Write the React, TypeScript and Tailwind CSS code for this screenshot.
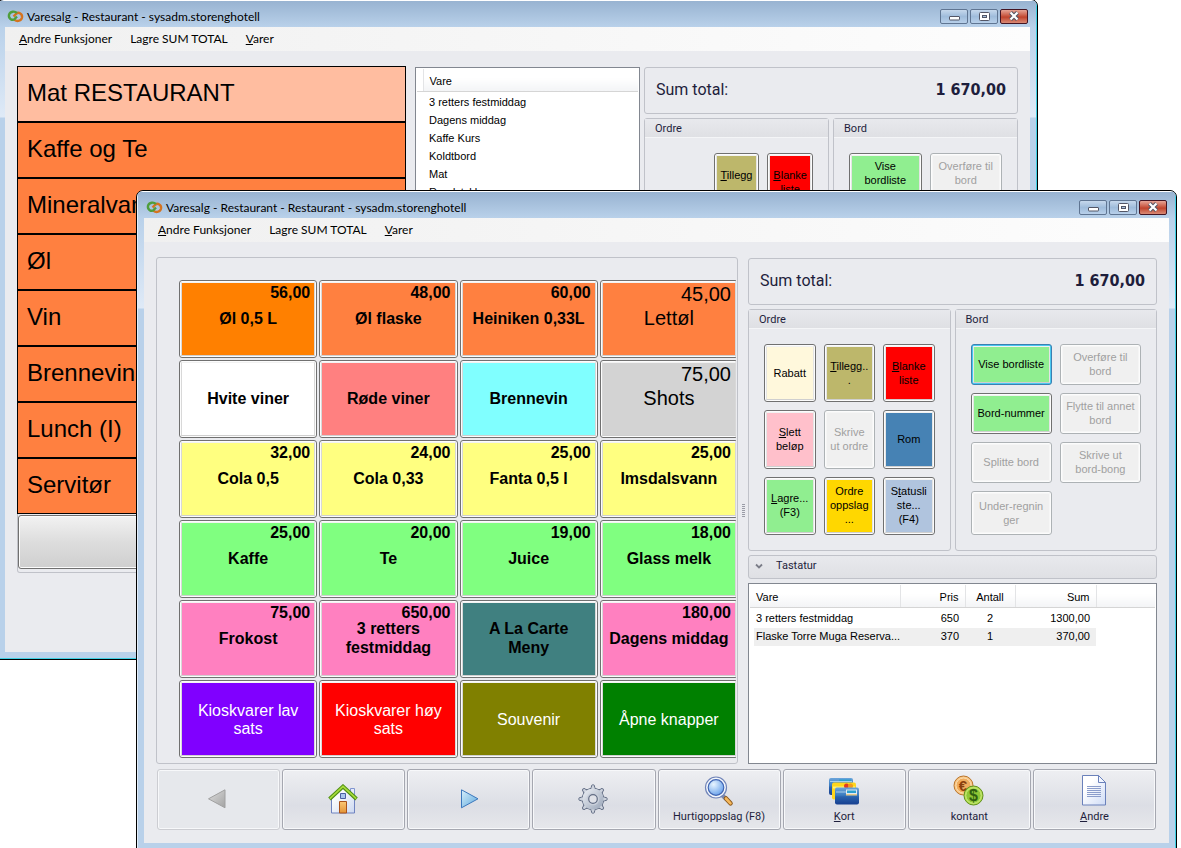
import { ReactNode } from "react";
import clsx from "clsx";

type Product = {
  name: string[];
  price?: string;
  color: string;
  style?: "bold" | "large" | "light";
};

const products: Product[] = [
  { name: ["Øl 0,5 L"], price: "56,00", color: "bg-[#ff8000]" },
  { name: ["Øl flaske"], price: "48,00", color: "bg-[#ff8040]" },
  { name: ["Heiniken 0,33L"], price: "60,00", color: "bg-[#ff8040]" },
  { name: ["Lettøl"], price: "45,00", color: "bg-[#ff8040]", style: "large" },
  { name: ["Hvite viner"], color: "bg-white" },
  { name: ["Røde viner"], color: "bg-[#ff8080]" },
  { name: ["Brennevin"], color: "bg-[#80ffff]" },
  { name: ["Shots"], price: "75,00", color: "bg-[#d3d3d3]", style: "large" },
  { name: ["Cola 0,5"], price: "32,00", color: "bg-[#ffff80]" },
  { name: ["Cola 0,33"], price: "24,00", color: "bg-[#ffff80]" },
  { name: ["Fanta 0,5 l"], price: "25,00", color: "bg-[#ffff80]" },
  { name: ["Imsdalsvann"], price: "25,00", color: "bg-[#ffff80]" },
  { name: ["Kaffe"], price: "25,00", color: "bg-[#80ff80]" },
  { name: ["Te"], price: "20,00", color: "bg-[#80ff80]" },
  { name: ["Juice"], price: "19,00", color: "bg-[#80ff80]" },
  { name: ["Glass melk"], price: "18,00", color: "bg-[#80ff80]" },
  { name: ["Frokost"], price: "75,00", color: "bg-[#ff80c0]" },
  { name: ["3 retters", "festmiddag"], price: "650,00", color: "bg-[#ff80c0]" },
  { name: ["A La Carte", "Meny"], color: "bg-[#408080]" },
  { name: ["Dagens middag"], price: "180,00", color: "bg-[#ff80c0]" },
  { name: ["Kioskvarer lav", "sats"], color: "bg-[#8000ff]", style: "light" },
  { name: ["Kioskvarer høy", "sats"], color: "bg-[#ff0000]", style: "light" },
  { name: ["Souvenir"], color: "bg-[#808000]", style: "light" },
  { name: ["Åpne knapper"], color: "bg-[#008000]", style: "light" },
];

const categories = [
  "Mat RESTAURANT",
  "Kaffe og Te",
  "Mineralvann",
  "Øl",
  "Vin",
  "Brennevin",
  "Lunch (I)",
  "Servitør",
];

const items = [
  "3 retters festmiddag",
  "Dagens middag",
  "Kaffe Kurs",
  "Koldtbord",
  "Mat",
  "Rundstykker",
];

const orderLines = [
  { name: "3 retters festmiddag", price: "650", count: "2", sum: "1300,00" },
  { name: "Flaske Torre Muga Reserva...", price: "370", count: "1", sum: "370,00" },
];

/* ---------- Window chrome ---------- */

function Logo() {
  return (
    <svg width="17" height="13" viewBox="0 0 17 13" fill="none" strokeWidth="2.4">
      <path d="M7 9.500C9 11.600 14 11.600 15 7.800 15.800 3.600 11.500 1.800 9.500 3.500L6.500 6.500" stroke="#d5731f" />
      <path d="M10 3C8 1 3 1 2 4.800 1.200 9 5.500 10.800 7.500 9.100L10 6.500" stroke="#4f9e3c" />
    </svg>
  );
}

function CaptionButton({ kind }: { kind: "Minimer" | "Maksimer" | "Lukk" }) {
  return (
    <button
      aria-label={kind}
      className={clsx(
        "flex h-[15px] w-7 items-center justify-center rounded-[2px] border",
        kind === "Lukk"
          ? "border-[#431422] bg-linear-to-b from-[#e6a496] via-[#c0432c] via-55% to-[#d98a76]"
          : "border-[#5f7592] bg-linear-to-b from-[#c6d8ec] via-[#9fbcdb] via-50% to-[#b8d0ea]",
      )}
    >
      {kind === "Minimer" && (
        <svg width="13" height="11" viewBox="0 0 13 11">
          <rect x="1.500" y="5.500" width="10" height="3.500" rx="0.500" fill="#fff" stroke="#535666" />
        </svg>
      )}
      {kind === "Maksimer" && (
        <svg width="11" height="9" viewBox="0 0 11 9">
          <rect x="0.500" y="0.500" width="10" height="8" rx="1" fill="#fff" stroke="#535666" />
          <rect x="3.500" y="3.500" width="4" height="2" fill="#a9c3df" stroke="#535666" />
        </svg>
      )}
      {kind === "Lukk" && (
        <svg width="12" height="10" viewBox="0 0 12 10">
          <path d="m2.500 1.500 7 7m0-7-7 7" stroke="#535666" strokeWidth="4.200" />
          <path d="m2.500 1.500 7 7m0-7-7 7" stroke="#fff" strokeWidth="2.200" />
        </svg>
      )}
    </button>
  );
}

function AppWindow({
  title,
  className,
  children,
}: {
  title: string;
  className: string;
  children: ReactNode;
}) {
  return (
    <section
      className={clsx(
        "absolute flex flex-col overflow-hidden rounded-t-[7px] border border-black bg-[#b9d1ea] font-['Lato','Noto_Sans',sans-serif] text-[12px] text-black",
        className,
      )}
    >
      <div className="flex min-h-0 flex-1 flex-col rounded-t-[6px] border border-t-white border-r-[#3fd0e4] border-b-[#3fd0e4] border-l-[#e4eef9]">
        <header className="flex h-[26px] shrink-0 items-center bg-linear-to-b from-[#98b3d1] to-[#b9d1ea] pt-1 pr-2 pl-2">
          <Logo />
          <h1 className="flex-1 pt-px pl-[3px] leading-4">{title}</h1>
          <div className="flex gap-0.5">
            <CaptionButton kind="Minimer" />
            <CaptionButton kind="Maksimer" />
            <CaptionButton kind="Lukk" />
          </div>
        </header>
        {/* side borders carry a light streak that stops below the menu */}
        <div className="flex min-h-0 flex-1 bg-linear-to-b from-[#b9d1ea] from-0% via-[#dfeaf7] via-[90px] to-[#b9d1ea] to-[91px] px-1.5 pb-1.5">
          <div className="flex min-h-0 flex-1 flex-col bg-[#eaebef]">
            <nav className="flex h-6 shrink-0 items-center gap-[18px] bg-linear-to-r from-[#f0f0f0] to-[#fdfdfd] pl-3.5">
              <button className="leading-4">
                <u>A</u>ndre Funksjoner
              </button>
              <button className="leading-4">
                La<u>g</u>re SUM TOTAL
              </button>
              <button className="leading-4">
                <u>V</u>arer
              </button>
            </nav>
            {children}
          </div>
        </div>
      </div>
    </section>
  );
}

/* ---------- Shared controls ---------- */

function SumTotal() {
  return (
    <div className="flex h-[47px] shrink-0 items-center justify-between rounded-[3px] border border-[#c0c2c9] px-[11px] pb-0.5 font-['DejaVu_Sans_Condensed','DejaVu_Sans',sans-serif] text-[16px] text-[#1e1e3c]">
      <span className="font-['Roboto',sans-serif]">Sum total:</span>
      <strong>1 670,00</strong>
    </div>
  );
}

function Group({ title, children }: { title: string; children: ReactNode }) {
  return (
    <fieldset className="flex min-w-0 flex-1 flex-col rounded-[3px] border border-[#c0c2c9]">
      <div className="flex h-[19px] shrink-0 items-center border-b border-[#f4f5f7] bg-linear-to-b from-[#e8e9ed] to-[#dfe0e4] pt-0.5 pl-2.5 font-['Roboto',sans-serif] text-[11px] text-[#1e1e3c]">
        {title}
      </div>
      <div className="flex min-h-0 flex-1 flex-col p-[15px]">{children}</div>
    </fieldset>
  );
}

function ColorButton({
  color,
  disabled,
  focused,
  children,
}: {
  color?: string;
  disabled?: boolean;
  focused?: boolean;
  children: ReactNode;
}) {
  return (
    <button
      disabled={disabled}
      className={clsx(
        "flex min-w-0 overflow-hidden rounded-[3px] border p-px font-['Liberation_Sans',Arial,sans-serif] text-[11px] leading-[14px]",
        focused && "border-[#3c7fb1] bg-[#48c8f0]",
        disabled && "border-[#adb2b5] bg-[#fcfcfc] text-[#a0a0a0]",
        !focused && !disabled && "border-[#707070] bg-[#fcfcfc]",
      )}
    >
      <span
        className={clsx(
          "flex h-full w-full items-center justify-center border border-x-[#e4e4e4] border-t-[#f2f2f2] border-b-[#cfcfcf] pb-px text-center",
          color ?? "bg-[#f0f0f0]",
          disabled && "border-[#f6f6f6]!",
        )}
      >
        <span className="block">{children}</span>
      </span>
    </button>
  );
}

function ProductButton({ name, price, color, style = "bold" }: Product) {
  return (
    <button className="flex rounded-[3px] border border-[#707070] bg-[#fcfcfc] p-px font-['Liberation_Sans',Arial,sans-serif]">
      <span
        className={clsx(
          "grid h-full w-full border border-x-[#d8d8d8] border-t-[#f2f2f2] border-b-[#cfcfcf]",
          color,
          style === "bold" && "pb-0.5 text-[16px] leading-[19px] font-bold",
          style === "large" && "pb-0.5 text-[20px] leading-[22px]",
          style === "light" && "pt-0.5 text-[16px] leading-[18px] text-white",
        )}
      >
        {price && <span className="pr-1 text-right [grid-area:1/1]">{price}</span>}
        <span className="self-center text-center [grid-area:1/1]">
          {name.map((line) => (
            <span key={line} className="block whitespace-nowrap">
              {line}
            </span>
          ))}
        </span>
      </span>
    </button>
  );
}

function ToolButton({
  icon,
  label,
  children,
  disabled,
}: {
  icon: ReactNode;
  label: string;
  children?: ReactNode;
  disabled?: boolean;
}) {
  return (
    <button
      aria-label={label}
      disabled={disabled}
      className={clsx(
        "flex h-[61px] min-w-0 flex-1 flex-col items-center justify-center gap-0.5 rounded-[3px] border font-['Roboto',sans-serif] text-[11px] leading-4 text-[#1e1e3c]",
        "shadow-[inset_0_0_0_1px_#f7f8fa]",
        disabled
          ? "border-[#cccdd2] bg-[#e6e8ec]"
          : "border-[#a5a7b0] bg-linear-to-b from-[#eeeff2] via-[#dcdee5] via-60% to-[#e6e7eb]",
      )}
    >
      {icon}
      {children && <span>{children}</span>}
    </button>
  );
}

/* ---------- Toolbar icons ---------- */

function ArrowIcon({ back }: { back?: boolean }) {
  return (
    <svg width="32" height="32" viewBox="0 0 32 32">
      <defs>
        <linearGradient id="arrowGray" x1="0" x2="1" y1="0" y2="1">
          <stop offset="0" stopColor="#dedede" />
          <stop offset="1" stopColor="#a2a2a2" />
        </linearGradient>
        <linearGradient id="arrowBlue" x1="0" x2="1" y1="0" y2="1">
          <stop offset="0" stopColor="#d6effb" />
          <stop offset="1" stopColor="#5fa9dd" />
        </linearGradient>
      </defs>
      {back ? (
        <path d="M22 5.800v18L5.500 14.800z" fill="url(#arrowGray)" stroke="#a0a0a0" />
      ) : (
        <path d="M8.500 5.800v18l16.500-9z" fill="url(#arrowBlue)" stroke="#3b77bd" />
      )}
    </svg>
  );
}

function HomeIcon() {
  return (
    <svg width="32" height="32" viewBox="0 0 32 32">
      <defs>
        <linearGradient id="wall" x1="0" x2="1" y1="0" y2="1">
          <stop offset="0.200" stopColor="#fff" />
          <stop offset="1" stopColor="#ccd8f0" />
        </linearGradient>
        <linearGradient id="door" x1="0" x2="0" y1="0" y2="1">
          <stop offset="0" stopColor="#fbc775" />
          <stop offset="1" stopColor="#e39336" />
        </linearGradient>
      </defs>
      <path d="M22.500 4.500h4v10h-4z" fill="#e4eafa" stroke="#8095cf" />
      <path d="M3.500 14.500 15 4l11.500 10.500v14.500h-23z" fill="url(#wall)" stroke="#6f83c0" />
      <path d="M11.500 17.500h7v11.500h-7z" fill="url(#door)" stroke="#a9521b" />
      <path d="M12.500 9.500h5v5h-5z" fill="#a9c5ee" stroke="#4a5fa3" />
      <path d="M1.500 15 15 2.500 28.500 15" fill="none" stroke="#4f8f12" strokeWidth="3.800" />
      <path d="M1.800 14.600 15 2.400 28.200 14.600" fill="none" stroke="#a8dc3c" strokeWidth="1.700" />
    </svg>
  );
}

function GearIcon() {
  const teeth = [0, 45, 90, 135, 180, 225, 270, 315];
  return (
    <svg width="32" height="32" viewBox="0 0 32 32">
      <defs>
        <linearGradient id="gear" x1="0" x2="1" y1="0" y2="1">
          <stop offset="0" stopColor="#eef1f6" />
          <stop offset="1" stopColor="#98a4b7" />
        </linearGradient>
      </defs>
      {/* outline first, then the fill on top so that only the rim keeps the stroke */}
      <g fill="#b9c1ce" stroke="#626d84" strokeLinejoin="round">
        {teeth.map((angle) => (
          <path
            key={angle}
            d="M10.800 6.500 13.200 3.500 13.800 1.200Q15 .4 16.200 1.200L16.800 3.500 19.200 6.500"
            transform={`rotate(${angle} 15 15)`}
          />
        ))}
        <circle cx="15" cy="15" r="10.800" />
      </g>
      {teeth.map((angle) => (
        <path
          key={angle}
          d="M11.500 7 13.700 4 14.200 1.600h1.600L16.300 4 18.500 7z"
          fill="#ccd2dc"
          transform={`rotate(${angle} 15 15)`}
        />
      ))}
      <circle cx="15" cy="15" r="10.500" fill="url(#gear)" />
      <circle cx="15" cy="15" r="6.300" fill="#c9cfda" />
      <circle cx="15" cy="15" r="4.300" fill="#e0e2e8" stroke="#626d84" strokeWidth="1.200" />
    </svg>
  );
}

function SearchIcon() {
  return (
    <svg width="32" height="32" viewBox="0 0 32 32">
      <defs>
        <radialGradient id="lens" cx="0.350" cy="0.300" r="0.800">
          <stop offset="0" stopColor="#e8f5ff" />
          <stop offset="1" stopColor="#5f9bea" />
        </radialGradient>
      </defs>
      <path d="m19 20 4 4" stroke="#7b87a8" strokeWidth="4" />
      <path d="m23 23.500 4.500 4.800" stroke="#8d5a1e" strokeWidth="4.600" strokeLinecap="round" />
      <path d="m23 23.500 4.500 4.800" stroke="#f6b95d" strokeWidth="2.600" strokeLinecap="round" />
      <circle cx="13" cy="12.500" r="10.500" fill="#f4f7fc" stroke="#7084b8" strokeWidth="1.200" />
      <circle cx="13" cy="12.500" r="7.800" fill="url(#lens)" stroke="#4166b4" strokeWidth="1.200" />
    </svg>
  );
}

function CardsIcon() {
  return (
    <svg width="32" height="32" viewBox="0 0 32 32">
      <defs>
        <linearGradient id="card" x1="0" x2="0" y1="0" y2="1">
          <stop offset="0" stopColor="#6ba4da" />
          <stop offset="0.450" stopColor="#3b7cc0" />
          <stop offset="0.550" stopColor="#2a62ad" />
          <stop offset="1" stopColor="#173f90" />
        </linearGradient>
      </defs>
      <rect x="1" y="3" width="24" height="17" rx="2" fill="url(#card)" />
      <path d="M11 4.500h12V7H11z" fill="#2ba0cf" />
      <path d="M2 6.500h22" stroke="#a8cdea" />
      <rect x="4" y="7.500" width="24" height="17" rx="2" fill="#ffd61c" />
      <path d="M5 11.500h22v2H5z" fill="#fff27a" />
      <circle cx="18.500" cy="11" r="2.500" fill="#e23b22" />
      <circle cx="22.500" cy="11" r="2.500" fill="#f29a1c" />
      <rect x="7" y="12.500" width="24" height="17" rx="2" fill="url(#card)" />
      <path d="M8 17h10" stroke="#a8cdea" />
      <path d="M18 14.500h11v4.500H18z" fill="#dfe9f4" />
      <path d="M19 15.500h9V18h-9z" fill="#2ba0cf" />
      <path d="M18 19h11v1.500H18z" fill="#e6c98a" />
    </svg>
  );
}

function CoinsIcon() {
  return (
    <svg width="32" height="32" viewBox="0 0 32 32" className="font-['Liberation_Sans',sans-serif] font-bold">
      <circle cx="10.500" cy="10.500" r="9.500" fill="#f9c784" stroke="#b8732b" />
      <circle cx="10.500" cy="10.500" r="7.500" fill="#f0ac5e" stroke="#fbdcae" />
      <text x="10" y="16" fontSize="15" textAnchor="middle" fill="#8a3f0d">
        €
      </text>
      <circle cx="20.500" cy="20.500" r="9.500" fill="#b4de4e" stroke="#5f8f1d" />
      <circle cx="20.500" cy="20.500" r="7.700" fill="#8fc736" stroke="#c9e97c" />
      <text x="20.500" y="26" fontSize="16" textAnchor="middle" fill="#305f10">
        $
      </text>
    </svg>
  );
}

function DocumentIcon() {
  return (
    <svg width="32" height="32" viewBox="0 0 32 32">
      <defs>
        <linearGradient id="sheet" x1="0" x2="1" y1="0" y2="1">
          <stop offset="0.300" stopColor="#fff" />
          <stop offset="1" stopColor="#cfdcf6" />
        </linearGradient>
      </defs>
      <path d="M4.500.500h16l7 7v22.500h-23z" fill="url(#sheet)" stroke="#6a81bb" />
      <path d="M20.500.500v7h7z" fill="#f2f6ff" stroke="#6a81bb" />
      <path d="M9 11.500h14M9 13.500h14M9 15.500h14M9 17.500h14M9 19.500h14M9 21.500h14" stroke="#8b9dcb" />
    </svg>
  );
}

/* ---------- The two windows ---------- */

const headFill = "border-b border-[#d5d5d5] bg-linear-to-b from-white from-40% to-[#f3f4f6]";
const headCell = clsx(headFill, "h-[22px] px-1.5 pt-0.5 font-normal");

function CategoryWindow() {
  return (
    <AppWindow
      title="Varesalg - Restaurant - sysadm.storenghotell"
      className="-top-px right-[143px] bottom-[188px] -left-[3px]"
    >
      <main className="flex min-h-0 flex-1 px-3 pt-[15px]">
        <div className="w-[389px] shrink-0">
          <ul className="font-['Liberation_Sans',Arial,sans-serif] text-[24px]">
            {categories.map((category, i) => (
              <li key={category}>
                <button
                  className={clsx(
                    "h-14 w-full border border-black pb-0.5 pl-[9px] text-left",
                    i === 0 ? "bg-[#ffbda0]" : "bg-[#ff8040]",
                  )}
                >
                  {category}
                </button>
              </li>
            ))}
          </ul>
          <div className="rounded-b-[3px] border border-t-0 border-[#c0c2c9] pt-px pb-[3px]">
            <button
              aria-label="Neste side"
              className="block h-[54px] w-full rounded-[3px] border border-[#707070] bg-linear-to-b from-[#f2f2f2] from-0% via-[#dddddd] via-50% to-[#cfcfcf] shadow-[inset_0_0_0_1px_#fcfcfc]"
            />
          </div>
        </div>

        <div className="mt-px ml-[9px] w-[225px] shrink-0 border border-[#828790] bg-white p-px font-['Liberation_Sans',Arial,sans-serif] text-[11px]">
          <table className="w-full border-collapse text-left">
            <thead>
              <tr>
                <td className="w-1.5 border-r border-b border-r-[#e3e4e6] border-b-[#d5d5d5]" />
                <th className={headCell}>Vare</th>
              </tr>
            </thead>
            <tbody className="before:block before:h-0.5">
              {items.map((item) => (
                <tr key={item} className="h-[18px]">
                  <td />
                  <td className="px-1.5">{item}</td>
                </tr>
              ))}
            </tbody>
          </table>
        </div>

        <div className="mt-px ml-1 flex min-w-0 flex-1 flex-col gap-1">
          <SumTotal />
          <div className="flex h-[242px] gap-1">
            <Group title="Ordre">
              <div className="grid flex-1 grid-cols-3 grid-rows-3 gap-2">
                <span />
                <ColorButton color="bg-[#bdb76b]">
                  <u>T</u>illegg
                  <br />
                  ...
                </ColorButton>
                <ColorButton color="bg-[#ff0000]">
                  <u>B</u>lanke
                  <br />
                  liste
                </ColorButton>
              </div>
            </Group>
            <Group title="Bord">
              <div className="grid flex-1 grid-cols-2 grid-rows-[41px_41px_41px_1fr] gap-2">
                <ColorButton color="bg-[#90ee90]">
                  Vise
                  <br />
                  bordliste
                </ColorButton>
                <ColorButton disabled>
                  Overføre til
                  <br />
                  bord
                </ColorButton>
              </div>
            </Group>
          </div>
        </div>
      </main>
    </AppWindow>
  );
}

function SalesWindow() {
  return (
    <AppWindow
      title="Varesalg - Restaurant - Restaurant - sysadm.storenghotell"
      className="top-[190px] right-1 -bottom-[3px] left-[136px]"
    >
      <main className="flex min-h-0 flex-1 flex-col gap-[5px] px-3 pt-[15px] pb-[13px]">
        <div className="flex min-h-0 flex-1">
          <div className="flex min-w-0 flex-1 rounded-[3px] border border-[#c0c2c9] pt-[22px] pr-px pb-[5px] pl-[22px]">
            <div className="min-w-0 flex-1 overflow-hidden">
              <div className="-mr-0.5 grid h-full grid-cols-4 grid-rows-6 gap-0.5">
                {products.map((product, i) => (
                  <ProductButton key={i} {...product} />
                ))}
              </div>
            </div>
          </div>

          {/* splitter */}
          <div className="flex w-2.5 flex-col items-center justify-center gap-px">
            {[0, 1, 2, 3, 4, 5, 6].map((i) => (
              <span key={i} className="h-px w-[3px] bg-[#9a9ca6]" />
            ))}
          </div>

          <div className="flex w-[409px] shrink-0 flex-col gap-1 pt-px">
            <SumTotal />
            <div className="flex h-[242px] shrink-0 gap-1">
              <Group title="Ordre">
                <div className="grid flex-1 grid-cols-3 grid-rows-3 gap-2">
                  <ColorButton color="bg-[#fff8dc]">Rabatt</ColorButton>
                  <ColorButton color="bg-[#bdb76b]">
                    <u>T</u>illegg..
                    <br />.
                  </ColorButton>
                  <ColorButton color="bg-[#ff0000]">
                    <u>B</u>lanke
                    <br />
                    liste
                  </ColorButton>
                  <ColorButton color="bg-[#ffc0cb]">
                    <u>S</u>lett
                    <br />
                    beløp
                  </ColorButton>
                  <ColorButton disabled>
                    Skrive
                    <br />
                    ut ordre
                  </ColorButton>
                  <ColorButton color="bg-[#4682b4]">Rom</ColorButton>
                  <ColorButton color="bg-[#90ee90]">
                    <u>L</u>agre...
                    <br />
                    (F3)
                  </ColorButton>
                  <ColorButton color="bg-[#ffd700]">
                    Ordre
                    <br />
                    oppslag
                    <br />
                    ...
                  </ColorButton>
                  <ColorButton color="bg-[#b0c4de]">
                    S<u>t</u>atusli
                    <br />
                    ste...
                    <br />
                    (F4)
                  </ColorButton>
                </div>
              </Group>
              <Group title="Bord">
                <div className="grid flex-1 grid-cols-2 grid-rows-[41px_41px_41px_1fr] gap-2">
                  <ColorButton color="bg-[#90ee90]" focused>
                    Vise bordliste
                  </ColorButton>
                  <ColorButton disabled>
                    Overføre til
                    <br />
                    bord
                  </ColorButton>
                  <ColorButton color="bg-[#90ee90]">Bord-nummer</ColorButton>
                  <ColorButton disabled>
                    Flytte til annet
                    <br />
                    bord
                  </ColorButton>
                  <ColorButton disabled>Splitte bord</ColorButton>
                  <ColorButton disabled>
                    Skrive ut
                    <br />
                    bord-bong
                  </ColorButton>
                  <ColorButton disabled>
                    Under-regnin
                    <br />
                    ger
                  </ColorButton>
                </div>
              </Group>
            </div>

            <button className="flex h-6 shrink-0 items-center gap-3 rounded-[3px] border border-[#c0c2c9] bg-linear-to-b from-[#e8e9ed] to-[#dfe0e4] pb-0.5 pl-1.5 font-['Roboto',sans-serif] text-[11px] text-[#1e1e3c]">
              <svg width="9" height="7" viewBox="0 0 9 7" fill="none">
                <path d="m1 1.500 3 3 3-3" stroke="#7b7d88" strokeWidth="1.800" />
              </svg>
              Tastatur
            </button>

            <div className="min-h-0 flex-1 border border-[#828790] bg-white p-px font-['Liberation_Sans',Arial,sans-serif] text-[11px]">
              <table className="w-full table-fixed border-collapse">
                <colgroup>
                  <col className="w-1" />
                  <col className="w-[146px]" />
                  <col className="w-[65px]" />
                  <col className="w-[50px]" />
                  <col className="w-[81px]" />
                  <col />
                </colgroup>
                <thead>
                  <tr>
                    <td className={headFill} />
                    <th className={clsx(headCell, "border-r border-r-[#e3e4e6] pl-0.5! text-left")}>Vare</th>
                    <th className={clsx(headCell, "border-r border-r-[#e3e4e6] text-right")}>Pris</th>
                    <th className={clsx(headCell, "border-r border-r-[#e3e4e6] px-0!")}>Antall</th>
                    <th className={clsx(headCell, "border-r border-r-[#e3e4e6] text-right")}>Sum</th>
                    <td className={headFill} />
                  </tr>
                </thead>
                <tbody className="before:block before:h-0.5">
                  {orderLines.map((line, i) => (
                    <tr key={line.name} className="h-[18px]">
                      <td />
                      <td className={clsx("pl-0.5 whitespace-nowrap", i % 2 && "bg-[#efefef]")}>{line.name}</td>
                      <td className={clsx("pr-1.5 text-right", i % 2 && "bg-[#efefef]")}>{line.price}</td>
                      <td className={clsx("text-center", i % 2 && "bg-[#efefef]")}>{line.count}</td>
                      <td className={clsx("pr-1.5 text-right", i % 2 && "bg-[#efefef]")}>{line.sum}</td>
                      <td />
                    </tr>
                  ))}
                </tbody>
              </table>
            </div>
          </div>
        </div>

        <div className="flex shrink-0 gap-0.5 pr-px pl-px">
          <ToolButton label="Forrige" icon={<ArrowIcon back />} disabled />
          <ToolButton label="Hjem" icon={<HomeIcon />} />
          <ToolButton label="Neste" icon={<ArrowIcon />} />
          <ToolButton label="Innstillinger" icon={<GearIcon />} />
          <ToolButton label="Hurtigoppslag (F8)" icon={<SearchIcon />}>
            Hurtigoppslag (F8)
          </ToolButton>
          <ToolButton label="Kort" icon={<CardsIcon />}>
            <u>K</u>ort
          </ToolButton>
          <ToolButton label="kontant" icon={<CoinsIcon />}>
            kontant
          </ToolButton>
          <ToolButton label="Andre" icon={<DocumentIcon />}>
            <u>A</u>ndre
          </ToolButton>
        </div>
      </main>
    </AppWindow>
  );
}

export default function App() {
  return (
    <div className="relative h-screen overflow-hidden bg-white">
      <CategoryWindow />
      <SalesWindow />
    </div>
  );
}
